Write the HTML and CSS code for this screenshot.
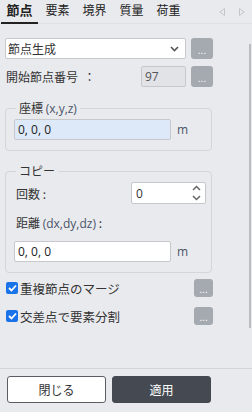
FILE: index.html
```html
<!DOCTYPE html>
<html lang="ja">
<head>
    <meta charset="UTF-8">
    <meta name="viewport" content="width=device-width, initial-scale=1.0">
    <title>節点</title>
    <link rel="stylesheet" href="styles.css">
</head>
<body>
    <div class="tabs">
        <div class="tab active">節点</div>
        <div class="tab">要素</div>
        <div class="tab">境界</div>
        <div class="tab">質量</div>
        <div class="tab">荷重</div>
        <div class="tab-arrows">
            <svg width="6" height="8" viewBox="0 0 6 8"><path d="M5.5 0.5 L0.8 4 L5.5 7.5 Z" fill="none" stroke="#c3c6cb" stroke-width="1"/></svg>
            <svg width="6" height="8" viewBox="0 0 6 8"><path d="M0.5 0.5 L5.2 4 L0.5 7.5 Z" fill="none" stroke="#c3c6cb" stroke-width="1"/></svg>
        </div>
    </div>

    <div class="panel">
        <div class="row">
            <div class="select">
                <span>節点生成</span>
                <svg width="9" height="6" viewBox="0 0 9 6"><path d="M1 1 L4.5 4.5 L8 1" fill="none" stroke="#555" stroke-width="1.6"/></svg>
            </div>
            <button class="dots">...</button>
        </div>

        <div class="row row-start">
            <span class="label">開始節点番号 &nbsp;：</span>
            <div class="num-box">97</div>
            <button class="dots">...</button>
        </div>

        <fieldset class="group">
            <legend>座標 <span class="latin">(x,y,z)</span></legend>
            <div class="unit-row">
                <div class="text-input focus">0, 0, 0</div>
                <span class="unit">m</span>
            </div>
        </fieldset>

        <fieldset class="group copy">
            <legend>コピー</legend>
            <div class="count-row">
                <span>回数 :</span>
                <div class="spin">
                    <span>0</span>
                    <svg width="9" height="16" viewBox="0 0 9 16"><path d="M1 5 L4.5 1.5 L8 5 M1 11 L4.5 14.5 L8 11" fill="none" stroke="#666" stroke-width="1.5"/></svg>
                </div>
            </div>
            <div class="dist-label">距離 <span class="latin">(dx,dy,dz)</span> :</div>
            <div class="unit-row">
                <div class="text-input">0, 0, 0</div>
                <span class="unit">m</span>
            </div>
        </fieldset>

        <div class="checks">
            <div class="check-row">
                <span class="check"><svg width="9" height="8" viewBox="0 0 9 8"><path d="M1 4 L3.5 6.5 L8 1.5" fill="none" stroke="#fff" stroke-width="1.8"/></svg></span>
                <span class="check-label">重複節点のマージ</span>
                <button class="dots small">...</button>
            </div>
            <div class="check-row">
                <span class="check"><svg width="9" height="8" viewBox="0 0 9 8"><path d="M1 4 L3.5 6.5 L8 1.5" fill="none" stroke="#fff" stroke-width="1.8"/></svg></span>
                <span class="check-label">交差点で要素分割</span>
                <button class="dots small">...</button>
            </div>
        </div>
    </div>

    <div class="scroll-thumb"></div>

    <div class="footer">
        <button class="btn-close">閉じる</button>
        <button class="btn-apply">適用</button>
    </div>
</body>
</html>
```

FILE: styles.css
```css
/* General */
body {
    margin: 0;
    width: 252px;
    height: 412px;
    background: #e9eaee;
    font-family: "Noto Sans CJK JP", "Noto Sans", sans-serif;
    font-size: 12px;
    color: #333;
    position: relative;
    overflow: hidden;
}

/* Tabs */
.tabs {
    display: flex;
    align-items: flex-end;
    height: 24px;
    border-bottom: 1px solid #dfe0e4;
    box-sizing: border-box;
}

.tab {
    width: 37px;
    text-align: center;
    font-size: 12px;
    line-height: 18px;
    padding-bottom: 3px;
    color: #222;
    border-bottom: 2px solid transparent;
    margin-bottom: -1px;
}

.tab.active {
    font-size: 13px;
    font-weight: bold;
    border-bottom-color: #222;
    margin-left: 1px;
    margin-right: 1px;
}

.tab-arrows {
    margin-left: auto;
    display: flex;
    gap: 14px;
    align-self: center;
    padding-right: 7px;
    padding-top: 1px;
}

/* Panel */
.panel {
    width: 208px;
    padding: 14px 0 0 5px;
}

.row {
    display: flex;
    align-items: center;
    gap: 5px;
    height: 21px;
}

.row-start {
    margin-top: 7px;
}

.select {
    flex: 1;
    height: 21px;
    box-sizing: border-box;
    background: #fff;
    border: 1px solid #c6c8cc;
    border-radius: 2px;
    display: flex;
    align-items: center;
    justify-content: space-between;
    padding: 0 6px 0 2px;
}

.dots {
    width: 22px;
    height: 21px;
    border: none;
    border-radius: 3px;
    background: #a5a9b0;
    color: #fff;
    font-size: 10px;
    line-height: 10px;
    padding: 4px 0 0 0;
    font-family: "Liberation Sans", sans-serif;
}

.dots.small {
    width: 19px;
    height: 18px;
}

.label {
    flex: 1;
    padding-left: 1px;
}

.num-box {
    width: 45px;
    height: 21px;
    box-sizing: border-box;
    background: #e1e3e7;
    border: 1px solid #c6c8cc;
    border-radius: 2px;
    padding-left: 3px;
    line-height: 19px;
    color: #555;
    font-family: "Open Sans", sans-serif;
}

/* Groups */
.group {
    margin: 14px 0 0 0;
    padding: 3px 8px 10px 8px;
    border: 1px solid #d3d5d9;
    border-radius: 4px;
    width: 207px;
    box-sizing: border-box;
}

.group legend {
    padding: 0 3px;
    margin-left: 2px;
    line-height: 14px;
}

.latin {
    color: #4a5568;
    font-family: "Open Sans", sans-serif;
    font-size: 12px;
}

.unit-row {
    display: flex;
    align-items: center;
    gap: 6px;
}

.text-input {
    width: 157px;
    height: 21px;
    box-sizing: border-box;
    background: #fff;
    border: 1px solid #c6c8cc;
    border-radius: 2px;
    padding-left: 3px;
    line-height: 19px;
    font-family: "Open Sans", sans-serif;
    color: #222;
}

.text-input.focus {
    background: #dde8f8;
}

.unit {
    color: #4a5568;
    font-family: "Open Sans", sans-serif;
}

.copy {
    margin-top: 13px;
    padding-top: 4px;
}

.count-row {
    display: flex;
    align-items: center;
    justify-content: space-between;
    padding-left: 2px;
}

.spin {
    width: 75px;
    height: 22px;
    box-sizing: border-box;
    background: #fff;
    border: 1px solid #c6c8cc;
    border-radius: 2px;
    display: flex;
    align-items: center;
    justify-content: space-between;
    padding: 0 4px;
    margin-right: -3px;
    font-family: "Open Sans", sans-serif;
}

.dist-label {
    margin: 10px 0 9px 2px;
}

/* Checkbox rows */
.checks {
    display: flex;
    flex-direction: column;
    gap: 10px;
    margin-top: 6px;
}

.check-row {
    display: flex;
    align-items: center;
    height: 18px;
}

.check {
    width: 12px;
    height: 12px;
    border-radius: 2px;
    background: #1a73e8;
    display: flex;
    align-items: center;
    justify-content: center;
    margin: 0 2px 0 1px;
}

.check-label {
    flex: 1;
    font-size: 12.5px;
}

/* Overlay scrollbar */
.scroll-thumb {
    position: absolute;
    right: 1px;
    top: 44px;
    width: 2px;
    height: 284px;
    background: #b9bbc0;
}

/* Footer */
.footer {
    position: absolute;
    left: 0;
    right: 0;
    top: 368px;
    border-top: 1px solid #d2d3d7;
    padding: 7px 0 0 7px;
    display: flex;
    gap: 6px;
}

.footer button {
    width: 99px;
    height: 27px;
    border-radius: 3px;
    font-family: "Noto Sans CJK JP", sans-serif;
    font-size: 12px;
}

.btn-close {
    background: #fff;
    border: 1px solid #5a5d63;
    color: #333;
}

.btn-apply {
    background: #454a52;
    border: 1px solid #454a52;
    color: #fff;
}
```
